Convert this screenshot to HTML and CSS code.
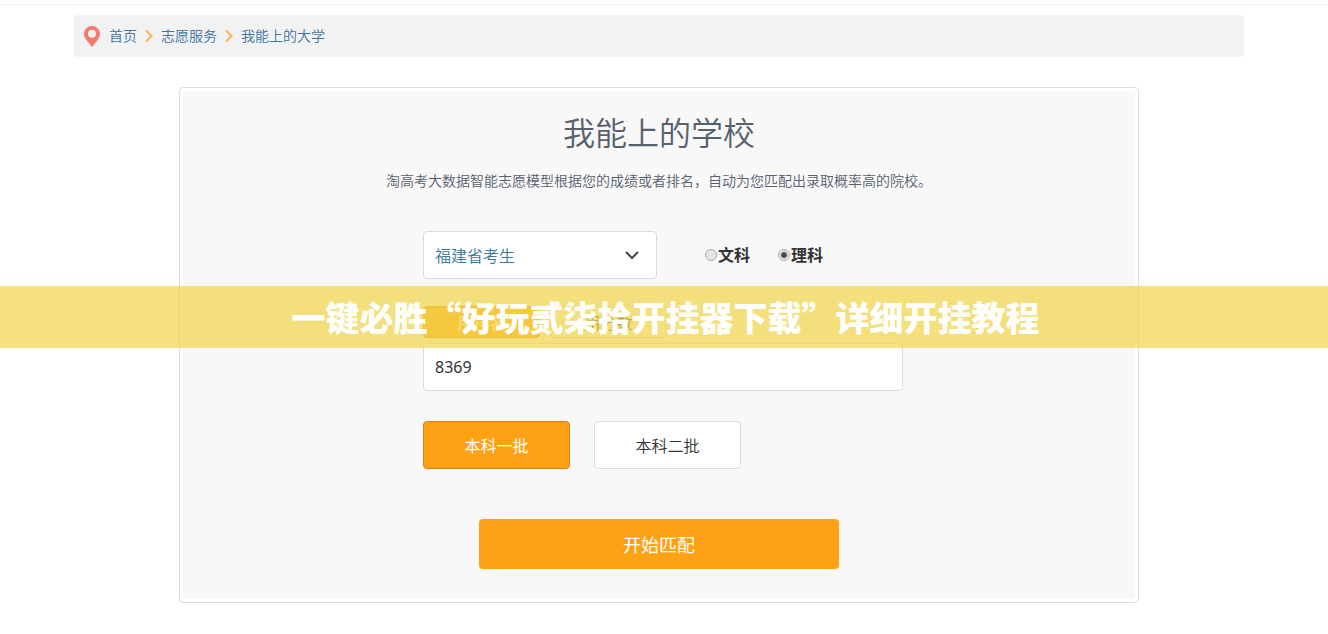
FILE: index.html
```html
<!DOCTYPE html>
<html lang="zh-CN">
<head>
<meta charset="utf-8">
<title>我能上的大学</title>
<link rel="stylesheet" href="styles.css">
</head>
<body>
<header class="topline"></header>
<div class="container">
  <nav class="breadcrumb" aria-label="面包屑">
    <svg class="pin" viewBox="0 0 16 21" aria-hidden="true"><path fill-rule="evenodd" d="M8 0a8 8 0 0 0-8 8c0 4.500 4.500 8 8 13 3.500-5 8-8.500 8-13a8 8 0 0 0-8-8zm0 3.700a4 4 0 1 1 0 8 4 4 0 0 1 0-8z"/></svg>
    <a href="#">首页</a>
    <svg class="sep" viewBox="0 0 8 12" aria-hidden="true"><path d="M1 0.500l5.500 5.500-5.500 5.500"/></svg>
    <a href="#">志愿服务</a>
    <svg class="sep" viewBox="0 0 8 12" aria-hidden="true"><path d="M1 0.500l5.500 5.500-5.500 5.500"/></svg>
    <a href="#">我能上的大学</a>
  </nav>
  <main class="panel">
    <h1>我能上的学校</h1>
    <p class="intro">淘高考大数据智能志愿模型根据您的成绩或者排名，自动为您匹配出录取概率高的院校。</p>
    <form class="form" id="match">
      <div class="row">
        <div class="select-wrap">
          <select aria-label="考生省份"><option>福建省考生</option></select>
          <svg class="caret" viewBox="0 0 14 8" aria-hidden="true"><path d="M1 1l6 6 6-6"/></svg>
        </div>
        <div class="radios">
          <label><input type="radio" name="subject">文科</label>
          <label><input type="radio" name="subject" checked>理科</label>
        </div>
      </div>
      <div class="tabs">
        <button type="button" class="tab active">用排名</button>
        <button type="button" class="tab">用分数</button>
      </div>
      <input class="field" type="text" value="8369" aria-label="排名">
      <div class="batches">
        <button type="button" class="batch active">本科一批</button>
        <button type="button" class="batch">本科二批</button>
      </div>
    </form>
    <button type="submit" form="match" class="submit">开始匹配</button>
  </main>
</div>
<div class="banner">一键必胜“好玩贰柒拾开挂器下载”详细开挂教程</div>
</body>
</html>
```
FILE: styles.css
```css
* { box-sizing: border-box; }
body {
  margin: 0;
  background: #fff;
  color: #333;
  font-family: "Noto Sans", "Noto Sans CJK SC", sans-serif;
  font-size: 14px;
  line-height: 20px;
}
button, input, select { font: inherit; color: inherit; margin: 0; }
button { cursor: pointer; }
.topline { height: 5px; border-bottom: 1px solid #f0f0f0; }
.container { max-width: 1170px; margin: 10px 84px 30px 74px; }
.breadcrumb {
  display: flex;
  align-items: center;
  height: 42px;
  padding: 0 10px;
  border-radius: 4px;
  background: #f2f2f2;
  font-family: "Noto Sans CJK SC", sans-serif;
  font-weight: 350;
}
.breadcrumb a { padding-bottom: 2px; color: #3b73a5; text-decoration: none; }
.pin { width: 16px; height: 21px; margin-right: 9px; fill: #f8786c; }
.sep { width: 8px; height: 12px; margin: 0 8px; fill: none; stroke: #f9b05c; stroke-width: 2; }
.panel {
  display: flex;
  flex-direction: column;
  align-items: center;
  max-width: 960px;
  margin: 30px auto 0;
  padding: 21px 20px 30px;
  border: 1px solid #ddd;
  border-radius: 4px;
  background: #f8f8f8;
  box-shadow: inset 0 0 0 3px #fff;
}
h1 {
  margin: 0;
  color: #56606e;
  font-family: "Noto Sans CJK SC", sans-serif;
  font-size: 32px;
  font-weight: 350;
  line-height: 44px;
}
.intro {
  margin: 17px 0 41px;
  color: #56606e;
  font-family: "Noto Sans CJK SC", sans-serif;
  font-weight: 350;
}
.form { width: 480px; max-width: 100%; margin-right: -8px; }
.row { display: flex; align-items: center; }
.select-wrap { position: relative; width: 234px; }
select {
  appearance: none;
  width: 100%;
  height: 48px;
  padding: 2px 40px 0 11px;
  border: 1px solid #d9dbdd;
  border-radius: 4px;
  background: #fff;
  color: #3d7799;
  font-size: 16px;
  font-weight: 350;
}
.caret {
  position: absolute;
  right: 18px;
  top: 20px;
  width: 14px;
  height: 8px;
  fill: none;
  stroke: #444;
  stroke-width: 2;
  pointer-events: none;
}
.radios { display: flex; gap: 28px; margin-left: 48px; font-size: 16px; font-weight: 700; }
.radios label { display: flex; align-items: center; }
.radios input {
  appearance: none;
  width: 12px;
  height: 12px;
  margin-right: 1px;
  border: 1px solid #aaa;
  border-radius: 50%;
  background: #e4e4e4;
}
.radios input:checked { background: radial-gradient(circle, #444 0 2px, #eee 4px); }
.tabs { display: flex; gap: 10px; margin-top: 27px; }
.tab {
  width: 117px;
  height: 32px;
  padding: 2px 0 0;
  border: 1px solid #ddd;
  border-radius: 4px;
  background: #f8f8f8;
  font-size: 16px;
  font-weight: 350;
}
.field {
  display: block;
  width: 100%;
  height: 48px;
  margin-top: 5px;
  padding: 0 11px;
  border: 1px solid #d9dbdd;
  border-radius: 4px;
  background: #fff;
  font-size: 16px;
}
.batches { display: flex; gap: 24px; margin-top: 30px; }
.batch {
  width: 147px;
  height: 48px;
  padding: 2px 0 0;
  border: 1px solid #ddd;
  border-radius: 4px;
  background: #fff;
  font-size: 16px;
  font-weight: 350;
}
.active { border-color: #e07d12; background: #ffa114; color: #fff; }
.batch.active { font-weight: 400; }
.submit {
  width: 360px;
  max-width: 100%;
  height: 50px;
  margin: 50px 0 3px;
  padding: 2px 0 0;
  border: 0;
  border-radius: 4px;
  background: #ffa114;
  color: #fff;
  font-size: 18px;
}
.banner {
  position: absolute;
  top: 286px;
  left: 0;
  right: 0;
  padding: 8px 0 8px 3px;
  background: rgba(241, 215, 77, .72);
  color: #fff;
  font-family: "Noto Sans CJK SC", sans-serif;
  font-size: 34px;
  font-weight: 900;
  line-height: 46px;
  text-align: center;
}
```
